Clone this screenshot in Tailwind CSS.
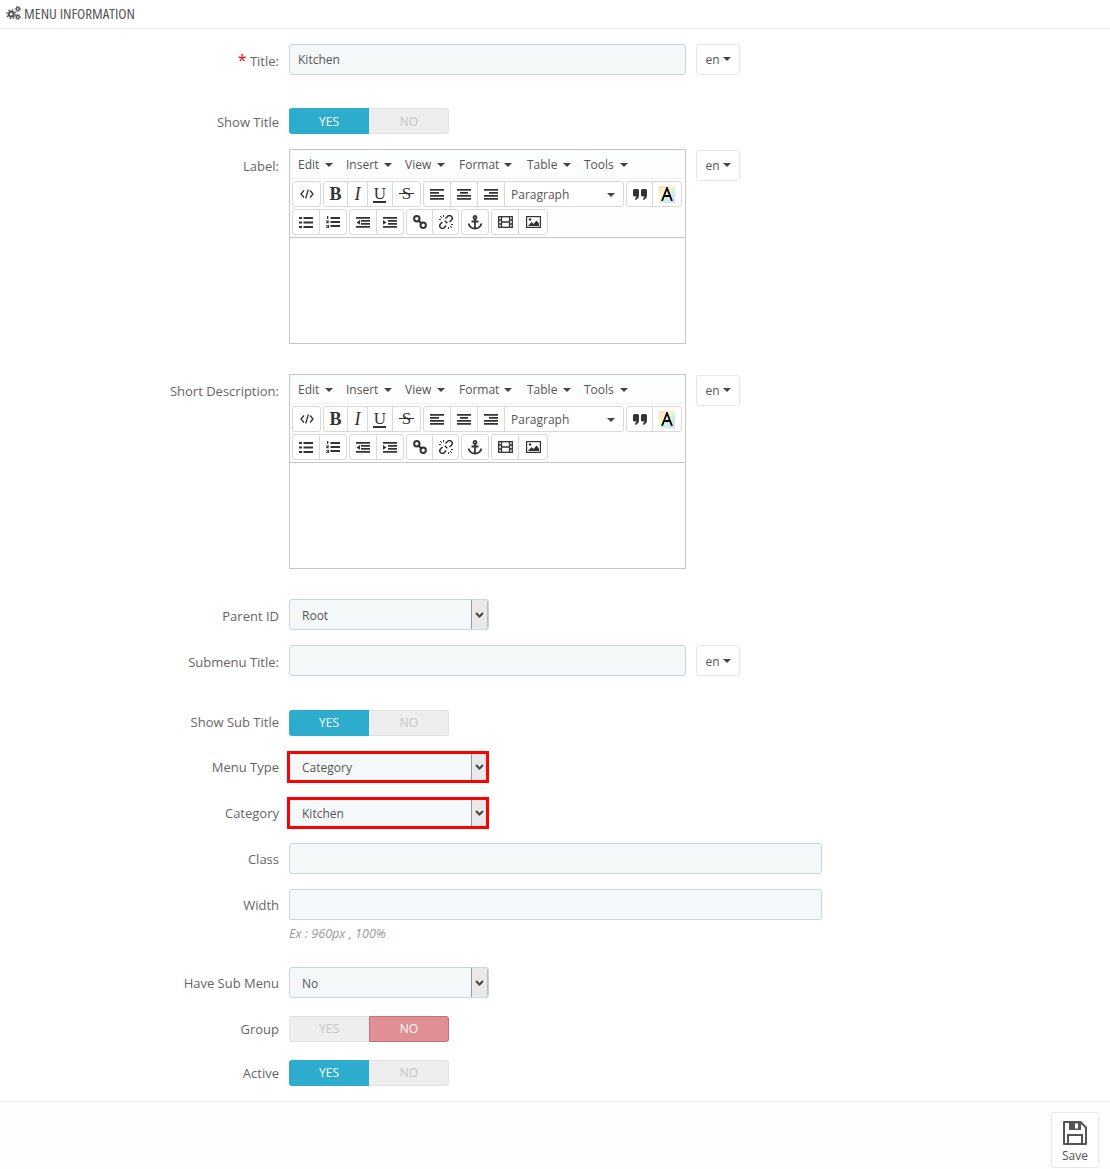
<!DOCTYPE html>
<html><head><meta charset="utf-8"><script src="https://cdn.jsdelivr.net/npm/@tailwindcss/browser@4"></script></head>
<body class="bg-white font-['Open_Sans',sans-serif] text-[13px] text-[#666] h-[1169px] overflow-hidden">
<div class="h-[29px] border-b border-[#eeeeee] flex items-start pt-[6px] pl-[6px] gap-[3px] text-[#555]">
<svg width="15" height="14" viewBox="0 0 15 14" fill="none" stroke="#555"><circle cx="5.200" cy="8.200" r="2.500" stroke-width="2.200"/><circle cx="5.200" cy="8.200" r="4.400" stroke-width="1.200" stroke-dasharray="1.700 1.750"/><circle cx="11.800" cy="3" r="1.500" stroke-width="1.300"/><circle cx="11.800" cy="3" r="2.700" stroke-width="1" stroke-dasharray="1.300 1.350"/><circle cx="11.800" cy="11" r="1.500" stroke-width="1.300"/><circle cx="11.800" cy="11" r="2.700" stroke-width="1" stroke-dasharray="1.300 1.350"/></svg>
<span class="text-[15px] [font-stretch:75%] leading-[15px]">MENU INFORMATION</span>
</div>

<!-- Title -->
<div class="flex mt-[15px] items-start">
<label class="w-[279px] h-[31px] text-right leading-[34px]"><span class="text-[#f00] text-[16px] leading-none">*</span> Title:</label>
<input class="ml-[10px] w-[397px] h-[31px] bg-[#f5f8f9] border border-[#c7d6db] rounded-[3px] px-2 text-[12px] text-[#555] outline-none" value="Kitchen">
<div class="ml-[10px] w-[44px] h-[31px] border border-[#e6e6e6] rounded-[3px] flex items-center justify-center gap-[3px] text-[12px] text-[#555]">en<span class="border-x-[4px] border-x-transparent border-t-[4px] border-t-[#444] mt-[-1px]"></span></div>
</div>

<!-- Show title -->
<div class="flex mt-[33px] items-center h-[26px]">
<label class="w-[279px] text-right mt-[3px]">Show Title</label>
<div class="ml-[10px] w-[160px] h-[26px] flex rounded-[3px] bg-[#eeeeee] shadow-[inset_0_0_0_1px_#e2e2e2] text-center leading-[28px] text-[12px]"><div class="w-[80px] bg-[#2eacce] text-white rounded-l-[3px]">YES</div><div class="w-[80px] text-[#c4c4c4]">NO</div></div>
</div>

<!-- Label editor -->
<div class="flex mt-[15px] items-start">
<label class="w-[279px] text-right leading-[34px]">Label:</label>
<div class="ml-[10px] w-[397px] h-[195px] border border-[#c5c5c5] text-[#444]">
<div class="h-[29px] bg-[#fcfdfe] border-b border-[#f0f0f0] flex items-center pl-[8px] pt-[2px] text-[12px] text-[#555]">
<span class="w-[48px] flex items-center gap-[6px]">Edit<i class="border-x-[4px] border-x-transparent border-t-[4px] border-t-[#444]"></i></span>
<span class="w-[59px] flex items-center gap-[6px]">Insert<i class="border-x-[4px] border-x-transparent border-t-[4px] border-t-[#444]"></i></span>
<span class="w-[54px] flex items-center gap-[6px]">View<i class="border-x-[4px] border-x-transparent border-t-[4px] border-t-[#444]"></i></span>
<span class="w-[68px] flex items-center gap-[5px]">Format<i class="border-x-[4px] border-x-transparent border-t-[4px] border-t-[#444]"></i></span>
<span class="w-[57px] flex items-center gap-[6px]">Table<i class="border-x-[4px] border-x-transparent border-t-[4px] border-t-[#444]"></i></span>
<span class="flex items-center gap-[6px]">Tools<i class="border-x-[4px] border-x-transparent border-t-[4px] border-t-[#444]"></i></span>
</div>
<div class="h-[59px] bg-[#fcfdfe] border-b border-[#c5c5c5] pl-[2px] pt-[2px]">
<div class="flex h-[26px]">
<div class="flex h-[26px] border border-[#d9d9d9] rounded-[3px] bg-white"><b class="w-[27px] flex items-center justify-center"><svg width="14" height="10" viewBox="0 0 14 10" fill="none" stroke="#333" stroke-width="1.300"><path d="M4 1.500L1 5l3 3.500M10 1.500L13 5l-3 3.500M8.300 .5L5.700 9.500"/></svg></b></div>
<div class="ml-[2px] flex h-[26px] border border-[#d9d9d9] rounded-[3px] bg-white font-['Liberation_Serif',serif] text-[#333] text-[18px] text-center leading-[24px]"><b class="w-[24px] border-r border-[#d9d9d9]">B</b><span class="w-[20px] border-r border-[#d9d9d9] italic font-medium">I</span><span class="w-[25px] border-r border-[#d9d9d9] text-[17px] relative">U<i class="absolute left-[5px] right-[6px] bottom-[3px] h-[2px] bg-[#333]"></i></span><span class="w-[27px] relative text-[17px]">S<i class="absolute left-[6px] right-[6px] top-[11px] h-[1px] bg-[#333]"></i></span></div>
<div class="ml-[2px] flex h-[26px] border border-[#d9d9d9] rounded-[3px] bg-white">
<b class="w-[27px] border-r border-[#d9d9d9] flex items-center justify-center"><svg width="14" height="11" fill="#333"><path d="M0 0h14v1.800H0zM0 3h9v1.800H0zM0 6h14v1.800H0zM0 9h14v1.800H0z"/></svg></b>
<b class="w-[27px] border-r border-[#d9d9d9] flex items-center justify-center"><svg width="14" height="11" fill="#333"><path d="M0 0h14v1.800H0zM3 3h8v1.800H3zM0 6h14v1.800H0zM0 9h14v1.800H0z"/></svg></b>
<b class="w-[27px] border-r border-[#d9d9d9] flex items-center justify-center"><svg width="14" height="11" fill="#333"><path d="M0 0h14v1.800H0zM5 3h9v1.800H5zM0 6h14v1.800H0zM0 9h14v1.800H0z"/></svg></b>
<span class="w-[118px] flex items-center justify-between pl-[6px] pr-[8px] pt-[2px] text-[12px] text-[#555]">Paragraph<i class="border-x-[4px] border-x-transparent border-t-[4px] border-t-[#444]"></i></span></div>
<div class="ml-[2px] flex h-[26px] border border-[#d9d9d9] rounded-[3px] bg-white">
<b class="w-[26px] border-r border-[#d9d9d9] flex items-center justify-center"><svg width="14" height="11" fill="#333"><path id="q" d="M0 1.500A1.500 1.500 0 0 1 1.500 0h3A1.500 1.500 0 0 1 6 1.500V6c0 2.500-1.500 4.500-3.500 5l-.7-1.300C2.800 9.200 3.300 8.400 3.300 7.500H1.500A1.500 1.500 0 0 1 0 6zM8 1.500A1.500 1.500 0 0 1 9.500 0h3A1.500 1.500 0 0 1 14 1.500V6c0 2.500-1.500 4.500-3.500 5l-.7-1.300c1-.5 1.500-1.300 1.500-2.200H9.500A1.500 1.500 0 0 1 8 6z"/></svg></b>
<b class="w-[28px] relative flex items-center justify-center"><span class="absolute left-[6px] top-[4px] w-[16px] h-[17px] bg-[linear-gradient(135deg,#fbd5d5,#fdf5c0_35%,#cdf3e4_60%,#cfe4fb_80%,#fbd5ea)]"></span><svg class="relative" width="12" height="14" fill="none" stroke="#000" stroke-width="1.800"><path d="M1 14L6 1l5 13M3 9h6"/></svg></b></div>
</div>
<div class="flex h-[26px] mt-[2px]">
<div class="flex h-[26px] border border-[#d9d9d9] rounded-[3px] bg-white">
<b class="w-[27px] border-r border-[#d9d9d9] flex items-center justify-center"><svg width="14" height="11" fill="#333"><path d="M0 0h3v2H0zM0 4.500h3v2H0zM0 9h3v2H0zM4.500 0h9.500v2H4.500zM4.500 4.500h9.500v2H4.500zM4.500 9h9.500v2H4.500z"/></svg></b>
<b class="w-[26px] flex items-center justify-center"><svg width="14" height="12" fill="#333"><path d="M4.500 1h9.500v2H4.500zM4.500 5h9.500v2H4.500zM4.500 9h9.500v2H4.500zM1 0h1.300v3H1zM0 4.500h3v1l-1.500 1h1.500v.8H0v-.9l1.500-1H0zM0 9h3v3H0v-.7h2v-.4H1v-.6h1v-.5H0z"/></svg></b></div>
<div class="ml-[2px] flex h-[26px] border border-[#d9d9d9] rounded-[3px] bg-white">
<b class="w-[27px] border-r border-[#d9d9d9] flex items-center justify-center"><svg width="14" height="11" fill="#333"><path d="M0 0h14v1.800H0zM5 3h9v1.800H5zM5 6h9v1.800H5zM0 9h14v1.800H0zM4 3v4.800L.5 5.400z"/></svg></b>
<b class="w-[26px] flex items-center justify-center"><svg width="14" height="11" fill="#333"><path d="M0 0h14v1.800H0zM5 3h9v1.800H5zM5 6h9v1.800H5zM0 9h14v1.800H0zM0 3v4.800l3.500-2.400z"/></svg></b></div>
<div class="ml-[2px] flex h-[26px] border border-[#d9d9d9] rounded-[3px] bg-white">
<b class="w-[26px] border-r border-[#d9d9d9] flex items-center justify-center"><svg width="14" height="14" fill="none" stroke="#333" stroke-width="2"><circle cx="3.800" cy="3.800" r="2.700"/><circle cx="10.200" cy="10.200" r="2.700"/><path d="M5 5l4 4"/></svg></b>
<b class="w-[25px] flex items-center justify-center"><svg width="14" height="14" fill="none" stroke="#333" stroke-width="1.500"><path d="M6.500 3.500L8.500 1.500a2.300 2.300 0 0 1 4 3.500L10.500 7M7 10.500L5.500 12.500a2.300 2.300 0 0 1-4-3.500L3.500 7M5.800 5.800l2.500 2.500" /><path d="M1 1l2 2M4.500 0v2M0 4.500h2M13 13l-2-2M9.500 14v-2M14 9.500h-2" stroke-width="1"/></svg></b></div>
<div class="ml-[2px] flex h-[26px] border border-[#d9d9d9] rounded-[3px] bg-white">
<b class="w-[26px] flex items-center justify-center"><svg width="14" height="15" fill="none" stroke="#333" stroke-width="1.800"><circle cx="7" cy="2.500" r="1.500"/><path d="M7 4v9.500M3.500 6.500h7M.8 8.500c0 3 3 5 6.200 5s6.200-2 6.200-5"/></svg></b></div>
<div class="ml-[2px] flex h-[26px] border border-[#d9d9d9] rounded-[3px] bg-white">
<b class="w-[27px] border-r border-[#d9d9d9] flex items-center justify-center"><svg width="15" height="12" fill="none" stroke="#333" stroke-width="1.300"><rect x=".7" y=".7" width="13.600" height="10.600"/><path d="M3.500 .7v10.600M11.500 .7v10.600M.7 4h2.800M.7 8h2.800M11.500 4h2.800M11.500 8h2.800M3.500 6h8"/></svg></b>
<b class="w-[28px] flex items-center justify-center"><svg width="15" height="12"><rect x=".6" y=".6" width="13.800" height="10.800" fill="none" stroke="#333" stroke-width="1.200"/><path d="M2 10l3.500-4 2 2 3-3.500 2.500 3V10z" fill="#333"/><circle cx="4" cy="3.500" r="1.200" fill="#333"/></svg></b></div>
</div>
</div>
</div>
<div class="ml-[10px] mt-[1px] w-[44px] h-[31px] border border-[#e6e6e6] rounded-[3px] flex items-center justify-center gap-[3px] text-[12px] text-[#555]">en<span class="border-x-[4px] border-x-transparent border-t-[4px] border-t-[#444] mt-[-1px]"></span></div>
</div>

<!-- Short description -->
<div class="flex mt-[30px] items-start">
<label class="w-[279px] text-right leading-[34px]">Short Description:</label>
<div class="ml-[10px] w-[397px] h-[195px] border border-[#c5c5c5] text-[#444]">
<div class="h-[29px] bg-[#fcfdfe] border-b border-[#f0f0f0] flex items-center pl-[8px] pt-[2px] text-[12px] text-[#555]">
<span class="w-[48px] flex items-center gap-[6px]">Edit<i class="border-x-[4px] border-x-transparent border-t-[4px] border-t-[#444]"></i></span>
<span class="w-[59px] flex items-center gap-[6px]">Insert<i class="border-x-[4px] border-x-transparent border-t-[4px] border-t-[#444]"></i></span>
<span class="w-[54px] flex items-center gap-[6px]">View<i class="border-x-[4px] border-x-transparent border-t-[4px] border-t-[#444]"></i></span>
<span class="w-[68px] flex items-center gap-[5px]">Format<i class="border-x-[4px] border-x-transparent border-t-[4px] border-t-[#444]"></i></span>
<span class="w-[57px] flex items-center gap-[6px]">Table<i class="border-x-[4px] border-x-transparent border-t-[4px] border-t-[#444]"></i></span>
<span class="flex items-center gap-[6px]">Tools<i class="border-x-[4px] border-x-transparent border-t-[4px] border-t-[#444]"></i></span>
</div>
<div class="h-[59px] bg-[#fcfdfe] border-b border-[#c5c5c5] pl-[2px] pt-[2px]">
<div class="flex h-[26px]">
<div class="flex h-[26px] border border-[#d9d9d9] rounded-[3px] bg-white"><b class="w-[27px] flex items-center justify-center"><svg width="14" height="10" viewBox="0 0 14 10" fill="none" stroke="#333" stroke-width="1.300"><path d="M4 1.500L1 5l3 3.500M10 1.500L13 5l-3 3.500M8.300 .5L5.700 9.500"/></svg></b></div>
<div class="ml-[2px] flex h-[26px] border border-[#d9d9d9] rounded-[3px] bg-white font-['Liberation_Serif',serif] text-[#333] text-[18px] text-center leading-[24px]"><b class="w-[24px] border-r border-[#d9d9d9]">B</b><span class="w-[20px] border-r border-[#d9d9d9] italic font-medium">I</span><span class="w-[25px] border-r border-[#d9d9d9] text-[17px] relative">U<i class="absolute left-[5px] right-[6px] bottom-[3px] h-[2px] bg-[#333]"></i></span><span class="w-[27px] relative text-[17px]">S<i class="absolute left-[6px] right-[6px] top-[11px] h-[1px] bg-[#333]"></i></span></div>
<div class="ml-[2px] flex h-[26px] border border-[#d9d9d9] rounded-[3px] bg-white">
<b class="w-[27px] border-r border-[#d9d9d9] flex items-center justify-center"><svg width="14" height="11" fill="#333"><path d="M0 0h14v1.800H0zM0 3h9v1.800H0zM0 6h14v1.800H0zM0 9h14v1.800H0z"/></svg></b>
<b class="w-[27px] border-r border-[#d9d9d9] flex items-center justify-center"><svg width="14" height="11" fill="#333"><path d="M0 0h14v1.800H0zM3 3h8v1.800H3zM0 6h14v1.800H0zM0 9h14v1.800H0z"/></svg></b>
<b class="w-[27px] border-r border-[#d9d9d9] flex items-center justify-center"><svg width="14" height="11" fill="#333"><path d="M0 0h14v1.800H0zM5 3h9v1.800H5zM0 6h14v1.800H0zM0 9h14v1.800H0z"/></svg></b>
<span class="w-[118px] flex items-center justify-between pl-[6px] pr-[8px] pt-[2px] text-[12px] text-[#555]">Paragraph<i class="border-x-[4px] border-x-transparent border-t-[4px] border-t-[#444]"></i></span></div>
<div class="ml-[2px] flex h-[26px] border border-[#d9d9d9] rounded-[3px] bg-white">
<b class="w-[26px] border-r border-[#d9d9d9] flex items-center justify-center"><svg width="14" height="11" fill="#333"><path d="M0 1.500A1.500 1.500 0 0 1 1.500 0h3A1.500 1.500 0 0 1 6 1.500V6c0 2.500-1.500 4.500-3.500 5l-.7-1.300C2.800 9.200 3.300 8.400 3.300 7.500H1.500A1.500 1.500 0 0 1 0 6zM8 1.500A1.500 1.500 0 0 1 9.500 0h3A1.500 1.500 0 0 1 14 1.500V6c0 2.500-1.500 4.500-3.500 5l-.7-1.300c1-.5 1.500-1.300 1.500-2.200H9.500A1.500 1.500 0 0 1 8 6z"/></svg></b>
<b class="w-[28px] relative flex items-center justify-center"><span class="absolute left-[6px] top-[4px] w-[16px] h-[17px] bg-[linear-gradient(135deg,#fbd5d5,#fdf5c0_35%,#cdf3e4_60%,#cfe4fb_80%,#fbd5ea)]"></span><svg class="relative" width="12" height="14" fill="none" stroke="#000" stroke-width="1.800"><path d="M1 14L6 1l5 13M3 9h6"/></svg></b></div>
</div>
<div class="flex h-[26px] mt-[2px]">
<div class="flex h-[26px] border border-[#d9d9d9] rounded-[3px] bg-white">
<b class="w-[27px] border-r border-[#d9d9d9] flex items-center justify-center"><svg width="14" height="11" fill="#333"><path d="M0 0h3v2H0zM0 4.500h3v2H0zM0 9h3v2H0zM4.500 0h9.500v2H4.500zM4.500 4.500h9.500v2H4.500zM4.500 9h9.500v2H4.500z"/></svg></b>
<b class="w-[26px] flex items-center justify-center"><svg width="14" height="12" fill="#333"><path d="M4.500 1h9.500v2H4.500zM4.500 5h9.500v2H4.500zM4.500 9h9.500v2H4.500zM1 0h1.300v3H1zM0 4.500h3v1l-1.500 1h1.500v.8H0v-.9l1.500-1H0zM0 9h3v3H0v-.7h2v-.4H1v-.6h1v-.5H0z"/></svg></b></div>
<div class="ml-[2px] flex h-[26px] border border-[#d9d9d9] rounded-[3px] bg-white">
<b class="w-[27px] border-r border-[#d9d9d9] flex items-center justify-center"><svg width="14" height="11" fill="#333"><path d="M0 0h14v1.800H0zM5 3h9v1.800H5zM5 6h9v1.800H5zM0 9h14v1.800H0zM4 3v4.800L.5 5.400z"/></svg></b>
<b class="w-[26px] flex items-center justify-center"><svg width="14" height="11" fill="#333"><path d="M0 0h14v1.800H0zM5 3h9v1.800H5zM5 6h9v1.800H5zM0 9h14v1.800H0zM0 3v4.800l3.500-2.400z"/></svg></b></div>
<div class="ml-[2px] flex h-[26px] border border-[#d9d9d9] rounded-[3px] bg-white">
<b class="w-[26px] border-r border-[#d9d9d9] flex items-center justify-center"><svg width="14" height="14" fill="none" stroke="#333" stroke-width="2"><circle cx="3.800" cy="3.800" r="2.700"/><circle cx="10.200" cy="10.200" r="2.700"/><path d="M5 5l4 4"/></svg></b>
<b class="w-[25px] flex items-center justify-center"><svg width="14" height="14" fill="none" stroke="#333" stroke-width="1.500"><path d="M6.500 3.500L8.500 1.500a2.300 2.300 0 0 1 4 3.500L10.500 7M7 10.500L5.500 12.500a2.300 2.300 0 0 1-4-3.500L3.500 7M5.800 5.800l2.500 2.500" /><path d="M1 1l2 2M4.500 0v2M0 4.500h2M13 13l-2-2M9.500 14v-2M14 9.500h-2" stroke-width="1"/></svg></b></div>
<div class="ml-[2px] flex h-[26px] border border-[#d9d9d9] rounded-[3px] bg-white">
<b class="w-[26px] flex items-center justify-center"><svg width="14" height="15" fill="none" stroke="#333" stroke-width="1.800"><circle cx="7" cy="2.500" r="1.500"/><path d="M7 4v9.500M3.500 6.500h7M.8 8.500c0 3 3 5 6.200 5s6.200-2 6.200-5"/></svg></b></div>
<div class="ml-[2px] flex h-[26px] border border-[#d9d9d9] rounded-[3px] bg-white">
<b class="w-[27px] border-r border-[#d9d9d9] flex items-center justify-center"><svg width="15" height="12" fill="none" stroke="#333" stroke-width="1.300"><rect x=".7" y=".7" width="13.600" height="10.600"/><path d="M3.500 .7v10.600M11.500 .7v10.600M.7 4h2.800M.7 8h2.800M11.500 4h2.800M11.500 8h2.800M3.500 6h8"/></svg></b>
<b class="w-[28px] flex items-center justify-center"><svg width="15" height="12"><rect x=".6" y=".6" width="13.800" height="10.800" fill="none" stroke="#333" stroke-width="1.200"/><path d="M2 10l3.500-4 2 2 3-3.500 2.500 3V10z" fill="#333"/><circle cx="4" cy="3.500" r="1.200" fill="#333"/></svg></b></div>
</div>
</div>
</div>
<div class="ml-[10px] mt-[1px] w-[44px] h-[31px] border border-[#e6e6e6] rounded-[3px] flex items-center justify-center gap-[3px] text-[12px] text-[#555]">en<span class="border-x-[4px] border-x-transparent border-t-[4px] border-t-[#444] mt-[-1px]"></span></div>
</div>

<!-- Parent ID -->
<div class="flex mt-[30px] items-start">
<label class="w-[279px] h-[31px] text-right leading-[34px]">Parent ID</label>
<div class="ml-[10px] w-[200px] h-[31px] bg-[#f5f8f9] border border-[#c7d6db] rounded-[3px] flex text-[12px] text-[#555]"><span class="flex-1 pl-[12px] leading-[31px]">Root</span><span class="w-[17px] bg-[#e9e9e9] border-l border-[#9a9a9a] border-r border-r-[#bbb] flex items-center justify-center rounded-r-[3px]"><svg width="9" height="6" fill="none" stroke="#444" stroke-width="2"><path d="M1 1l3.500 3.500L8 1"/></svg></span></div>
</div>

<!-- Submenu -->
<div class="flex mt-[15px] items-start">
<label class="w-[279px] h-[31px] text-right leading-[34px]">Submenu Title:</label>
<input class="ml-[10px] w-[397px] h-[31px] bg-[#f5f8f9] border border-[#c7d6db] rounded-[3px] px-2 outline-none" value="">
<div class="ml-[10px] w-[44px] h-[31px] border border-[#e6e6e6] rounded-[3px] flex items-center justify-center gap-[3px] pt-[2px] text-[12px] text-[#555]">en<span class="border-x-[4px] border-x-transparent border-t-[4px] border-t-[#444] mt-[-1px]"></span></div>
</div>

<!-- Show sub title -->
<div class="flex mt-[34px] items-center h-[26px]">
<label class="w-[279px] text-right">Show Sub Title</label>
<div class="ml-[10px] w-[160px] h-[26px] flex rounded-[3px] bg-[#eeeeee] shadow-[inset_0_0_0_1px_#e2e2e2] text-center leading-[26px] text-[12px]"><div class="w-[80px] bg-[#2eacce] text-white rounded-l-[3px]">YES</div><div class="w-[80px] text-[#c4c4c4]">NO</div></div>
</div>

<!-- Menu type -->
<div class="flex mt-[15px] items-start">
<label class="w-[279px] text-right leading-[32px]">Menu Type</label>
<div class="ml-[8px] w-[202px] h-[32px] bg-[#f5f8f9] border-[3px] border-[#f00] flex text-[12px] text-[#555]"><span class="flex-1 pl-[12px] leading-[27px]">Category</span><span class="w-[15px] bg-[#e9e9e9] border-l border-[#9a9a9a] flex items-center justify-center"><svg width="9" height="6" fill="none" stroke="#444" stroke-width="2"><path d="M1 1l3.500 3.500L8 1"/></svg></span></div>
</div>
<div class="flex mt-[14px] items-start">
<label class="w-[279px] text-right leading-[32px]">Category</label>
<div class="ml-[8px] w-[202px] h-[32px] bg-[#f5f8f9] border-[3px] border-[#f00] flex text-[12px] text-[#555]"><span class="flex-1 pl-[12px] leading-[27px]">Kitchen</span><span class="w-[15px] bg-[#e9e9e9] border-l border-[#9a9a9a] flex items-center justify-center"><svg width="9" height="6" fill="none" stroke="#444" stroke-width="2"><path d="M1 1l3.500 3.500L8 1"/></svg></span></div>
</div>

<!-- Class -->
<div class="flex mt-[14px] items-start">
<label class="w-[279px] h-[31px] text-right leading-[32px]">Class</label>
<input class="ml-[10px] w-[533px] h-[31px] bg-[#f5f8f9] border border-[#c7d6db] rounded-[3px] px-2 outline-none" value="">
</div>
<div class="flex mt-[15px] items-start">
<label class="w-[279px] h-[31px] text-right leading-[32px]">Width</label>
<div class="ml-[10px]">
<input class="block w-[533px] h-[31px] bg-[#f5f8f9] border border-[#c7d6db] rounded-[3px] px-2 outline-none" value="">
<p class="text-[12.600px] italic text-[#999] leading-[16px] mt-[6px]">Ex : 960px , 100%</p>
</div>
</div>

<!-- Have sub menu -->
<div class="flex mt-[25px] items-start">
<label class="w-[279px] h-[31px] text-right leading-[32px]">Have Sub Menu</label>
<div class="ml-[10px] w-[200px] h-[31px] bg-[#f5f8f9] border border-[#c7d6db] rounded-[3px] flex text-[12px] text-[#555]"><span class="flex-1 pl-[12px] leading-[31px]">No</span><span class="w-[17px] bg-[#e9e9e9] border-l border-[#9a9a9a] border-r border-r-[#bbb] flex items-center justify-center rounded-r-[3px]"><svg width="9" height="6" fill="none" stroke="#444" stroke-width="2"><path d="M1 1l3.500 3.500L8 1"/></svg></span></div>
</div>

<!-- Group -->
<div class="flex mt-[18px] items-center h-[26px]">
<label class="w-[279px] text-right mt-[1px]">Group</label>
<div class="ml-[10px] w-[160px] h-[26px] flex rounded-[3px] bg-[#eeeeee] shadow-[inset_0_0_0_1px_#e2e2e2] text-center leading-[26px] text-[12px]"><div class="w-[80px] text-[#c4c4c4]">YES</div><div class="w-[80px] bg-[#e08f95] border border-[#c97077] text-white rounded-r-[3px] leading-[24px]">NO</div></div>
</div>

<!-- Active -->
<div class="flex mt-[18px] items-center h-[26px]">
<label class="w-[279px] text-right mt-[1px]">Active</label>
<div class="ml-[10px] w-[160px] h-[26px] flex rounded-[3px] bg-[#eeeeee] shadow-[inset_0_0_0_1px_#e2e2e2] text-center leading-[26px] text-[12px]"><div class="w-[80px] bg-[#2eacce] text-white rounded-l-[3px]">YES</div><div class="w-[80px] text-[#c4c4c4]">NO</div></div>
</div>

<!-- Footer -->
<div class="mt-[15px] h-[68px] bg-[#fcfdfe] border-t border-[#eeeeee] flex justify-end pr-[11px] pt-[10px]">
<div class="w-[48px] h-[56px] bg-white border border-[#e6e6e6] rounded-[3px] flex flex-col items-center pt-[8px] text-[#555] text-[12px]">
<svg width="24" height="24" viewBox="0 0 24 24"><path fill-rule="evenodd" fill="#555" d="M1 0h17l6 6v17a1 1 0 0 1-1 1H1a1 1 0 0 1-1-1V1a1 1 0 0 1 1-1zM2 2v20h2V13h16v9h2V7l-4-4v6H6V2zM6 15v7h12v-7zM12 2.500h3v5h-3z"/></svg>
<span class="leading-[18px] mt-[2px]">Save</span>
</div>
</div>
</body></html>
